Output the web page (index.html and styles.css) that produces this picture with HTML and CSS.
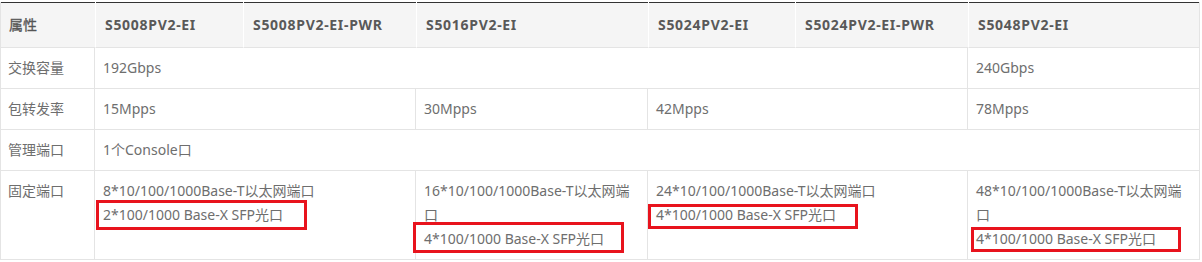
FILE: index.html
```html
<!DOCTYPE html>
<html lang="zh-CN">
<head>
<meta charset="utf-8">
<title>S5000PV2-EI 规格</title>
<link rel="stylesheet" href="styles.css">
</head>
<body>
<div class="sheet">
  <table class="spec">
    <colgroup>
      <col class="c0"><col class="c1"><col class="c2"><col class="c3"><col class="c4"><col class="c5"><col class="c6">
    </colgroup>
    <thead>
      <tr>
        <th class="first">属性</th>
        <th>S5008PV2-EI</th>
        <th>S5008PV2-EI-PWR</th>
        <th>S5016PV2-EI</th>
        <th>S5024PV2-EI</th>
        <th>S5024PV2-EI-PWR</th>
        <th>S5048PV2-EI</th>
      </tr>
    </thead>
    <tbody>
      <tr>
        <td>交换容量</td>
        <td colspan="5">192Gbps</td>
        <td>240Gbps</td>
      </tr>
      <tr>
        <td>包转发率</td>
        <td colspan="2">15Mpps</td>
        <td>30Mpps</td>
        <td colspan="2">42Mpps</td>
        <td>78Mpps</td>
      </tr>
      <tr>
        <td>管理端口</td>
        <td colspan="6">1个Console口</td>
      </tr>
      <tr class="tall">
        <td>固定端口</td>
        <td colspan="2"><div>8*10/100/1000Base-T以太网端口</div><div>2*100/1000 Base-X SFP光口</div></td>
        <td><div>16*10/100/1000Base-T以太网端口</div><div>4*100/1000 Base-X SFP光口</div></td>
        <td colspan="2"><div>24*10/100/1000Base-T以太网端口</div><div>4*100/1000 Base-X SFP光口</div></td>
        <td><div>48*10/100/1000Base-T以太网端口</div><div>4*100/1000 Base-X SFP光口</div></td>
      </tr>
    </tbody>
  </table>
  <div class="mark m1"></div>
  <div class="mark m2"></div>
  <div class="mark m3"></div>
  <div class="mark m4"></div>
</div>
</body>
</html>
```
FILE: styles.css
```css
html, body {
  margin: 0;
  padding: 0;
  background: #fff;
}

.sheet {
  position: relative;
  width: 1200px;
  padding-top: 2px;
}

.spec {
  width: 1200px;
  table-layout: fixed;
  border-collapse: separate;
  border-spacing: 0;
  border-left: 1px solid #e4e4e4;
  font-family: "Noto Sans", "Noto Sans CJK SC", sans-serif;
  font-size: 14px;
  line-height: 24px;
  color: #6e6e6e;
}

.c0 { width: 94px; }
.c1 { width: 148px; }
.c2 { width: 173px; }
.c3 { width: 232px; }
.c4 { width: 147px; }
.c5 { width: 173px; }
.c6 { width: 232px; }

.spec th {
  text-align: left;
  font-weight: bold;
  letter-spacing: 0.7px;
  color: #595959;
  padding: 11px 8px 10px 9px;
  background: linear-gradient(#333, #333) top left / 100% 1px no-repeat, #f5f5f5;
  border-left: 1px solid #fff;
  border-bottom: 1px solid #e4e4e4;
}

.spec th.first {
  border-left: 0;
  padding-left: 8px;
  font-weight: normal;
  letter-spacing: 0;
  color: #555;
  -webkit-text-stroke: 0.3px #555;
}

.spec th:last-child {
  border-right: 1px solid #e4e4e4;
}

.spec td {
  padding: 8px;
  vertical-align: top;
  border-right: 1px solid #e4e4e4;
  border-bottom: 1px solid #e4e4e4;
}

.spec td:first-child {
  padding-left: 7px;
}

.mark {
  position: absolute;
  box-sizing: border-box;
  border: 3px solid #e8131d;
}

.m1 { left: 96px;  top: 200px; width: 211px; height: 30px; }
.m2 { left: 413px; top: 222px; width: 211px; height: 31px; }
.m3 { left: 648px; top: 204px; width: 210px; height: 25px; }
.m4 { left: 971px; top: 227px; width: 210px; height: 25px; }
```
